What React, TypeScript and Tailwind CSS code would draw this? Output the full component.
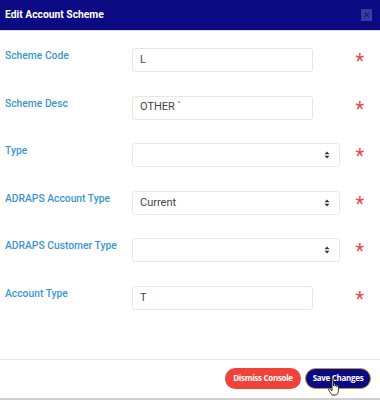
import React from 'react';

type Field = {
    label: string;
    kind: 'input' | 'select';
    value: string;
};

const fields: Field[] = [
    { label: 'Scheme Code', kind: 'input', value: 'L' },
    { label: 'Scheme Desc', kind: 'input', value: 'OTHER `' },
    { label: 'Type', kind: 'select', value: '' },
    { label: 'ADRAPS Account Type', kind: 'select', value: 'Current' },
    { label: 'ADRAPS Customer Type', kind: 'select', value: '' },
    { label: 'Account Type', kind: 'input', value: 'T' },
];

function SelectArrows() {
    return (
        <svg width="6" height="8" viewBox="0 0 6 8" className="fill-[#333]">
            <path d="M3 0.5 L5.5 3.2 H0.5 Z" />
            <path d="M3 7.5 L5.5 4.8 H0.5 Z" />
        </svg>
    );
}

function FormRow({ field }: { field: Field }) {
    return (
        <div className="flex items-start h-[24px]">
            <div className="w-[127px] text-[10.3px] font-medium leading-4 text-[#3b96d4]">{field.label}</div>
            {field.kind === 'input' ? (
                <div className="w-[181px] h-[24px] border border-[#e6e6e6] rounded-[3px] flex items-center px-[7px] text-[11px] text-[#444]">
                    {field.value}
                </div>
            ) : (
                <div className="w-[208px] h-[24px] border border-[#e6e6e6] rounded-[3px] flex items-center justify-between pl-[7px] pr-[9px] text-[11px] text-[#444]">
                    <span>{field.value}</span>
                    <SelectArrows />
                </div>
            )}
            <div className="ml-auto mr-[16px] h-[24px] flex items-center text-[#e8473c] text-[20px] leading-none pt-[2px]">*</div>
        </div>
    );
}

export default function App() {
    return (
        <div className="w-[380px] h-[400px] bg-white flex flex-col font-['Roboto',sans-serif] overflow-hidden">
            <div className="h-[31px] bg-[#0c0a82] border-b border-[#d9d9e6] flex items-center justify-between pl-[5px] pr-[8px]">
                <span className="text-white text-[10.3px] font-bold">Edit Account Scheme</span>
                <div className="w-[11px] h-[12px] bg-[#3a3aa0] flex items-center justify-center text-[#15157a] text-[9px] leading-none">✕</div>
            </div>

            <div className="flex flex-col gap-[23.6px] pt-[17px] pl-[5px]">
                {fields.map((f) => (
                    <FormRow key={f.label} field={f} />
                ))}
            </div>

            <div className="mt-auto border-t border-[#e6e6e6] h-[41px] flex items-center justify-end gap-[4px] pr-[9px] pb-[2px] border-b-2 border-b-[#cfcfcf] relative">
                <button className="w-[76px] h-[21px] rounded-full bg-[#f1423a] text-white text-[8px] font-bold font-['Open_Sans',sans-serif] tracking-[-0.3px]">
                    Dismiss Console
                </button>
                <button className="w-[66px] h-[21px] rounded-full bg-[#0c0a82] border border-[#b89a3a] text-white text-[8px] font-bold font-['Open_Sans',sans-serif] tracking-[-0.3px]">
                    Save Changes
                </button>
                <svg width="16" height="20" viewBox="0 0 16 20" className="absolute left-[327px] top-[18px]">
                    <path
                        d="M5 1.5 C5 0.7 6.6 0.7 6.6 1.5 V8 V6.3 C6.6 5.5 8.2 5.5 8.2 6.3 V8.2 V7 C8.2 6.2 9.8 6.2 9.8 7 V8.7 V7.8 C9.8 7 11.4 7 11.4 7.8 V12.5 C11.4 14.5 10.5 16 9.5 17 H5.2 L1.6 12.2 C1 11.4 2 10.4 2.8 11 L5 13 Z"
                        fill="white"
                        stroke="#222"
                        strokeWidth="0.9"
                        strokeLinejoin="round"
                    />
                </svg>
            </div>
        </div>
    );
}
